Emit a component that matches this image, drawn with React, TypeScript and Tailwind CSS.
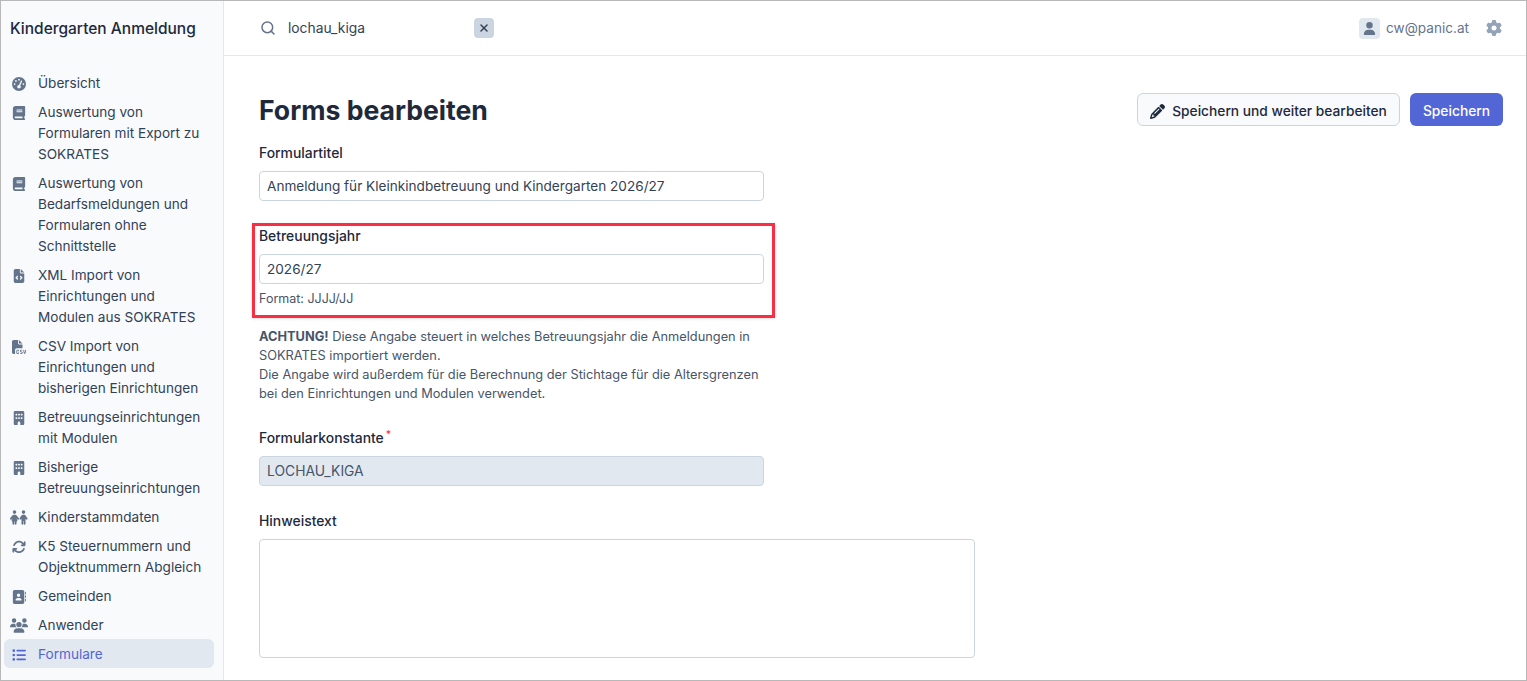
import React from 'react';
import { Search, X } from 'lucide-react';
import { FaAddressBook, FaArrowsRotate, FaBook, FaBuilding, FaChildren, FaFileCode, FaFileCsv, FaGaugeHigh, FaGear, FaListUl, FaPencil, FaUser, FaUsers } from 'react-icons/fa6';

const NAV_ITEMS = [
  { icon: FaGaugeHigh, label: 'Übersicht' },
  { icon: FaBook, label: 'Auswertung von Formularen mit Export zu SOKRATES' },
  { icon: FaBook, label: 'Auswertung von Bedarfsmeldungen und Formularen ohne Schnittstelle' },
  { icon: FaFileCode, label: 'XML Import von Einrichtungen und Modulen aus SOKRATES' },
  { icon: FaFileCsv, label: 'CSV Import von Einrichtungen und bisherigen Einrichtungen' },
  { icon: FaBuilding, label: 'Betreuungseinrichtungen mit Modulen' },
  { icon: FaBuilding, label: 'Bisherige Betreuungseinrichtungen' },
  { icon: FaChildren, label: 'Kinderstammdaten', wide: true },
  { icon: FaArrowsRotate, label: 'K5 Steuernummern und Objektnummern Abgleich' },
  { icon: FaAddressBook, label: 'Gemeinden' },
  { icon: FaUsers, label: 'Anwender', wide: true },
  { icon: FaListUl, label: 'Formulare', active: true },
];

function Sidebar() {
  return (
    <aside className="w-[223px] shrink-0 border-r border-[#e2e8f0] bg-[#f8fafc]">
      <div className="flex h-[55px] items-center pl-[9px] text-[15.5px] font-medium text-[#1e293b]">Kindergarten Anmeldung</div>
      <nav className="mt-[12px] flex flex-col pl-[3px] pr-[9px]">
        {NAV_ITEMS.map((item) => (
          <a
            key={item.label}
            className={`flex items-start rounded-md pb-[3px] pl-[6px] pr-2 pt-[5px] text-[13.6px] leading-[21px] ${item.active ? 'bg-[#e2e8f0] text-[#5266d6]' : 'text-[#334155]'}`}
          >
            <span className="flex h-[21px] w-[28px] shrink-0 items-center">
              <item.icon className={`${item.wide ? 'h-[15px] w-[18px]' : 'ml-[2px] h-[14px] w-[14px]'} ${item.active ? 'text-[#5266d6]' : 'text-[#64748b]'}`} />
            </span>
            <span>{item.label}</span>
          </a>
        ))}
      </nav>
    </aside>
  );
}

function TopBar() {
  return (
    <header className="flex h-[55px] items-center border-b border-[#e2e8f0] pl-[36px] pr-[24px]">
      <Search className="h-[16px] w-[16px] text-[#64748b]" strokeWidth={2.25} />
      <span className="ml-[12px] w-[186px] text-[13.8px] text-[#334155]">lochau_kiga</span>
      <span className="flex h-5 w-5 items-center justify-center rounded bg-[#cbd5e1]">
        <X className="h-3 w-3 text-[#334155]" strokeWidth={3} />
      </span>
      <div className="ml-auto flex items-center">
        <span className="flex h-[21px] w-[21px] items-center justify-center rounded bg-[#e2e8f0]">
          <FaUser className="h-[13px] w-[13px] text-[#64748b]" />
        </span>
        <span className="ml-[6px] text-[13.6px] text-[#64748b]">cw@panic.at</span>
        <FaGear className="ml-[17px] h-4 w-4 text-[#94a3b8]" />
      </div>
    </header>
  );
}

function Field({ label, value, disabled, required }: { label: string; value: string; disabled?: boolean; required?: boolean }) {
  return (
    <>
      <div className="pt-px text-[13.9px] font-medium leading-[21px] text-[#1e293b]">
        {label}
        {required && <sup className="ml-[2px] text-[#ef4444]">*</sup>}
      </div>
      <div
        className={`mt-[7px] flex h-[30px] w-[505px] items-center rounded border border-[#cbd5e1] pl-[7px] pr-2 ${disabled ? 'bg-[#e2e8f0] text-[13.85px] text-[#475569]' : 'bg-white text-[13.6px] text-[#334155]'}`}
      >
        {value}
      </div>
    </>
  );
}

export default function App() {
  return (
    <div className="flex h-[681px] w-[1527px] overflow-hidden border border-[#b8b8b8] bg-white font-['Inter',sans-serif]">
      <Sidebar />
      <div className="min-w-0 flex-1">
        <TopBar />
        <main className="pl-[35px] pr-[23px]">
          {/* Header */}
          <div className="flex items-center justify-between pt-[37px]">
            <h1 className="text-[26.6px] font-bold leading-[32px] text-[#1e293b]">Forms bearbeiten</h1>
            <div className="flex items-center gap-[10px]">
              <button type="button" className="flex h-[33px] w-[263px] items-center justify-center gap-[7px] rounded-md border border-[#cbd5e1] bg-[#f8fafc] pt-[3px] text-[13.75px] font-medium text-[#1e293b]">
                <FaPencil className="h-[15px] w-[15px]" />
                Speichern und weiter bearbeiten
              </button>
              <button type="button" className="h-[33px] w-[93px] rounded-md bg-[#5266d6] pt-[3px] text-[13.8px] font-medium text-white">Speichern</button>
            </div>
          </div>

          <div className="mt-[16px]">
            <Field label="Formulartitel" value="Anmeldung für Kleinkindbetreuung und Kindergarten 2026/27" />
          </div>

          {/* Betreuungsjahr */}
          <div className="relative mt-[24px] w-[505px]">
            <Field label="Betreuungsjahr" value="2026/27" />
            <p className="mt-[6px] text-[12.5px] leading-[18px] text-[#475569]">Format: JJJJ/JJ</p>
            <div className="absolute -left-[7px] -right-[11px] -top-[2px] -bottom-[10px] border-[3px] border-[#fb2d43] shadow-sm" />
          </div>

          <p className="mt-[19px] w-[505px] text-[12.8px] leading-[19px] text-[#475569]">
            <strong className="font-bold">ACHTUNG!</strong> Diese Angabe steuert in welches Betreuungsjahr die Anmeldungen in SOKRATES importiert werden.
            <br />
            Die Angabe wird außerdem für die Berechnung der Stichtage für die Altersgrenzen bei den Einrichtungen und Modulen verwendet.
          </p>

          <div className="mt-[24px]">
            <Field label="Formularkonstante" value="LOCHAU_KIGA" disabled required />
          </div>

          <div className="mt-[24px] pt-px text-[13.9px] font-medium leading-[21px] text-[#1e293b]">Hinweistext</div>
          <div className="mt-[7px] h-[119px] w-[716px] rounded border border-[#cbd5e1] bg-white" />
        </main>
      </div>
    </div>
  );
}
